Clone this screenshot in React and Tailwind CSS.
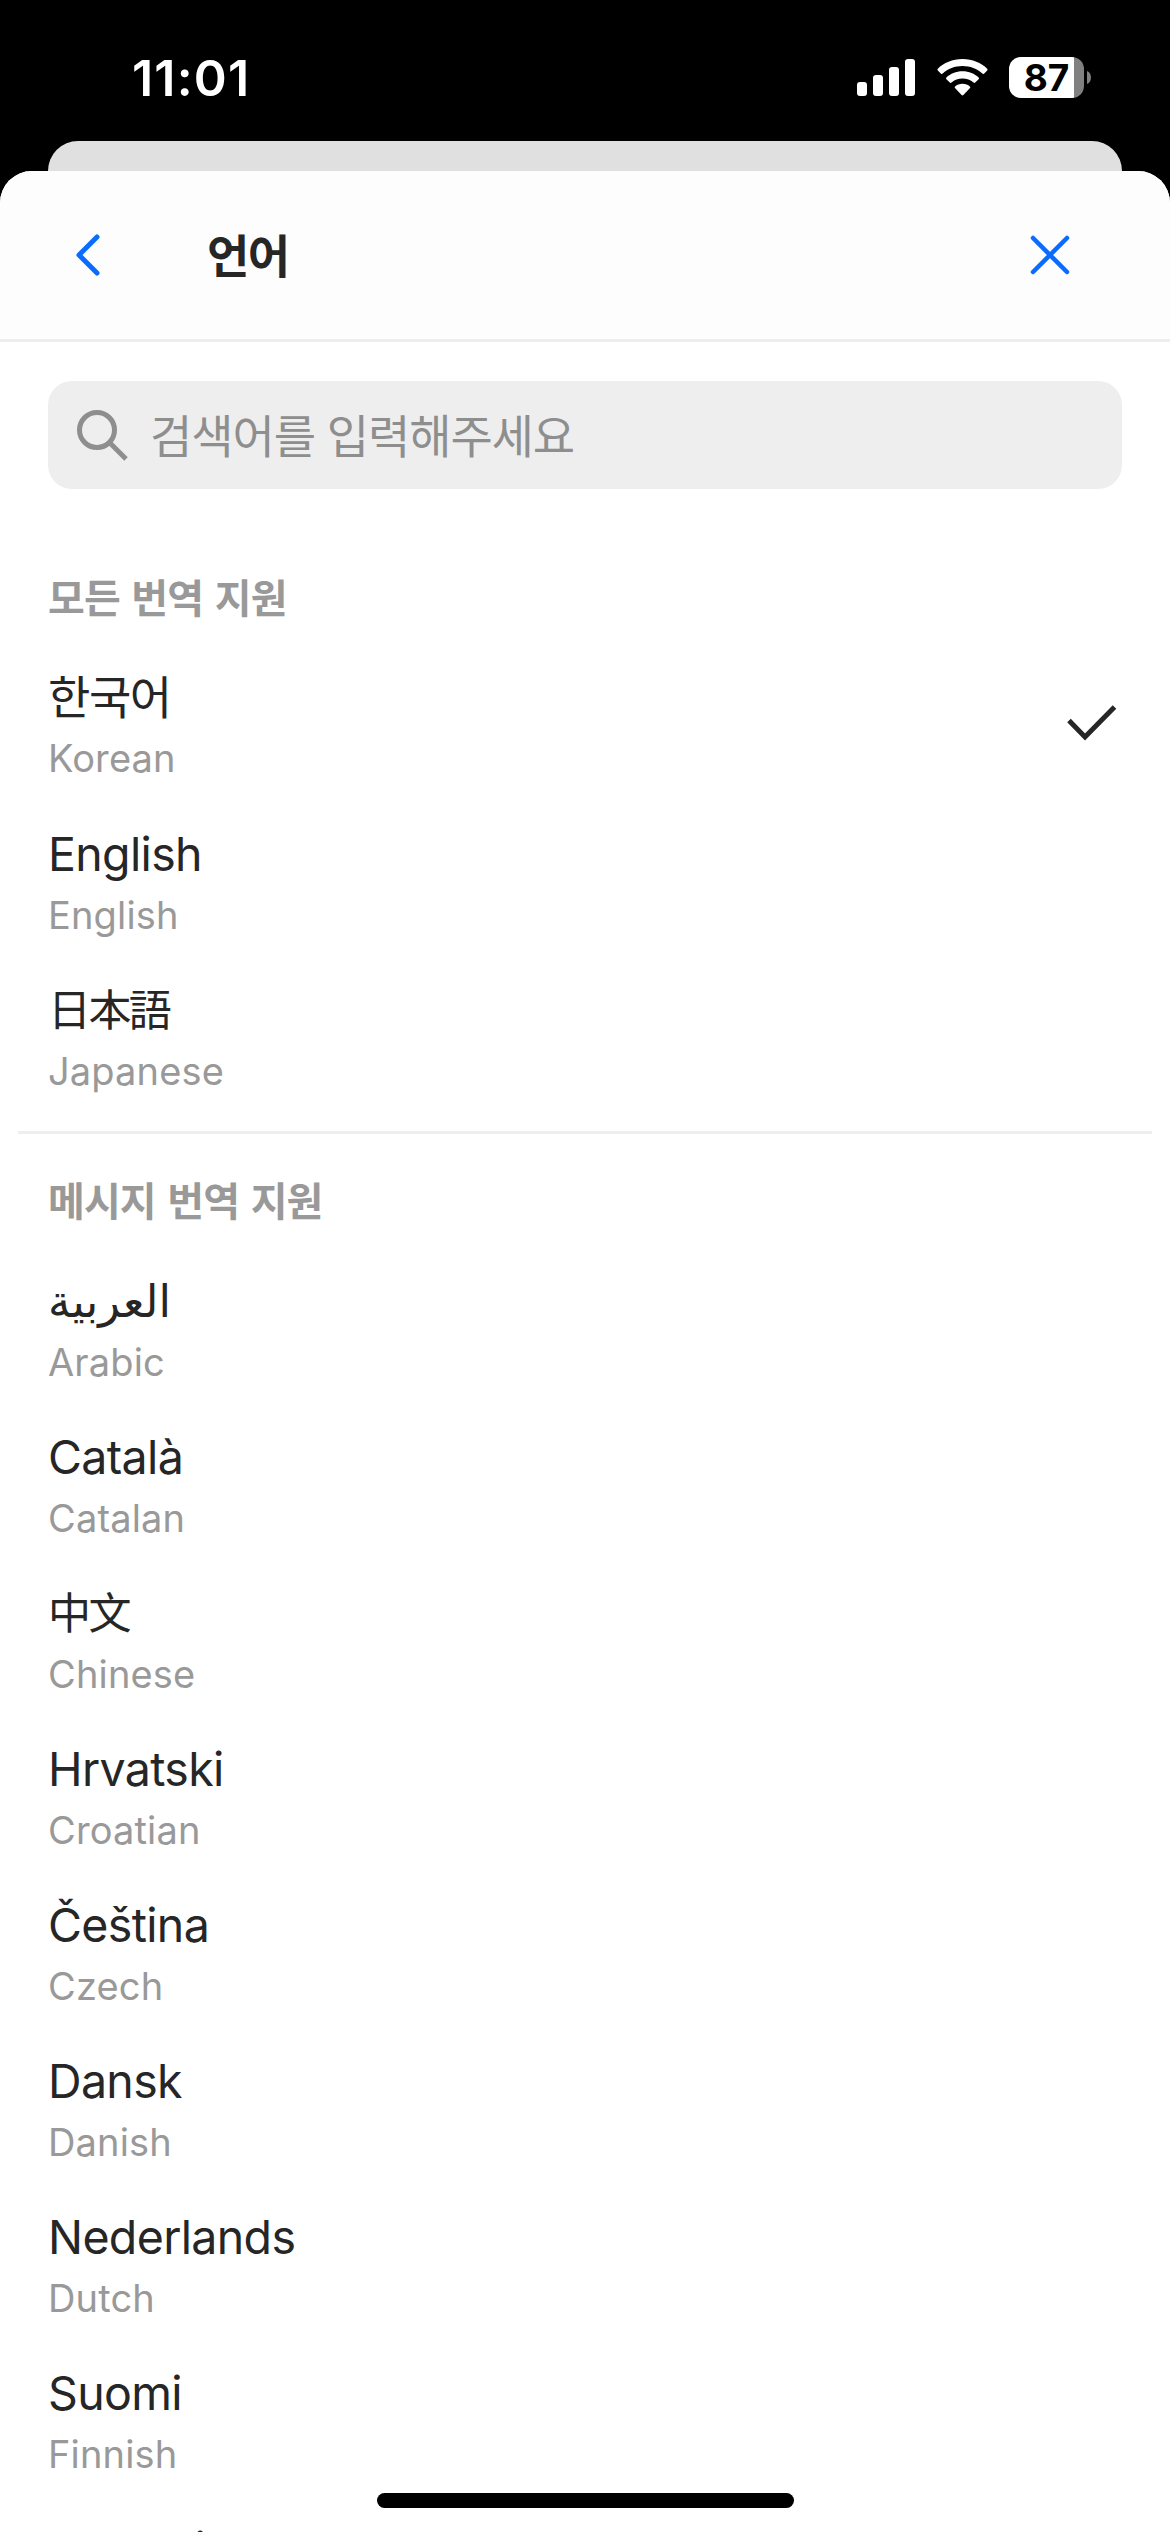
import React from "react";

// Languages grouped by the kind of translation they support
const sections = [
  {
    title: "모든 번역 지원",
    languages: [
      { id: "ko", name: "한국어", label: "Korean", nameClass: "text-[46px] tracking-[-1.4px] -mt-px mb-px" },
      { id: "en", name: "English", label: "English" },
      { id: "ja", name: "日本語", label: "Japanese", nameClass: "font-['Inter','Noto_Sans_CJK_JP',sans-serif] text-[43px] tracking-[-2.6px]" },
    ],
  },
  {
    title: "메시지 번역 지원",
    languages: [
      { id: "ar", name: "العربية", label: "Arabic", nameClass: "font-['Inter','DejaVu_Sans',sans-serif] text-[45px]" },
      { id: "ca", name: "Català", label: "Catalan" },
      { id: "zh", name: "中文", label: "Chinese", nameClass: "font-['Inter','Noto_Sans_CJK_SC',sans-serif] text-[43px] tracking-[-2.6px]" },
      { id: "hr", name: "Hrvatski", label: "Croatian" },
      { id: "cs", name: "Čeština", label: "Czech" },
      { id: "da", name: "Dansk", label: "Danish" },
      { id: "nl", name: "Nederlands", label: "Dutch" },
      { id: "fi", name: "Suomi", label: "Finnish" },
      { id: "fr", name: "Français", label: "French" },
    ],
  },
];

const StatusBar = () => (
  <div className="flex h-[141px] items-start justify-between pl-[132px] pr-[79px] text-white">
    <div className="pt-[48px] text-[50px] font-semibold leading-[60px] tracking-[1.2px]">11:01</div>

    <div className="flex items-start pt-[57px]">
      {/* Signal */}
      <div className="mt-[2px] flex h-[37px] w-[58px] items-end gap-[6px]">
        <div className="h-[14px] w-[10px] rounded-[3px] bg-white" />
        <div className="h-[21px] w-[10px] rounded-[3px] bg-white" />
        <div className="h-[29px] w-[10px] rounded-[3px] bg-white" />
        <div className="h-[37px] w-[10px] rounded-[3px] bg-white" />
      </div>

      {/* Wifi */}
      <svg className="ml-[22px] mt-[2px]" width="51" height="37" viewBox="0 0 51 37" fill="#fff">
        <path d="M25.5 0C35.500 0 44.300 3.900 50.200 9.700Q51 10.600 50.200 11.500L47 14.700Q46.200 15.400 45.300 14.600C40 9.700 33.200 7 25.500 7S11 9.700 5.700 14.600Q4.800 15.400 4 14.700L.8 11.500Q0 10.600 .8 9.700C6.700 3.900 15.500 0 25.500 0Z" />
        <path d="M25.500 12.300C32 12.300 37.500 14.800 41.600 18.500Q42.500 19.400 41.600 20.300L38.200 23.600Q37.400 24.300 36.500 23.600C33.500 21 29.800 19.500 25.500 19.500S17.500 21 14.500 23.600Q13.600 24.300 12.800 23.600L9.400 20.300Q8.500 19.400 9.400 18.500C13.500 14.800 19 12.300 25.500 12.300Z" />
        <path d="M25.500 24.800C28.500 24.800 31 25.900 32.900 27.400Q33.800 28.200 33 29.100L26.400 36Q25.500 36.900 24.600 36L18 29.100Q17.200 28.200 18.100 27.400C20 25.900 22.500 24.800 25.500 24.800Z" />
      </svg>

      {/* Battery */}
      <div className="ml-[21px] flex h-[41px] w-[75px] items-center justify-center rounded-[12px] bg-[linear-gradient(to_right,#fff_65px,#808080_65px)] text-[37px] font-bold leading-[46px] text-black">
        87
      </div>
      <svg className="ml-[3px] mt-[14px]" width="4" height="13" viewBox="0 0 4 13" fill="#808080">
        <path d="M0 0C5.300 2 5.300 11 0 13Z" />
      </svg>
    </div>
  </div>
);

const Header = () => (
  <header className="flex h-[171px] items-center justify-between border-b-[3px] border-[#eeeeee] bg-[#fdfdfd] pl-[73px] pr-[98px]">
    <div className="flex items-center">
      <svg width="28" height="46" viewBox="0 0 28 46" fill="none" stroke="#0a6cff" strokeWidth="5" strokeLinecap="round" strokeLinejoin="round">
        <path d="M24 5L6 23L24 41" />
      </svg>
      <h1 className="ml-[106px] mt-[2px] text-[46px] font-bold leading-[60px] tracking-[-1.5px] text-[#262626]">언어</h1>
    </div>
    <svg width="44" height="44" viewBox="0 0 44 44" fill="none" stroke="#0a6cff" strokeWidth="4.500" strokeLinecap="round">
      <path d="M5 5L39 39M39 5L5 39" />
    </svg>
  </header>
);

const SearchField = () => (
  <div className="px-[48px] pt-[39px]">
    <div className="flex h-[108px] items-center rounded-[24px] bg-[#eeeeee] pl-[29px]">
      <svg width="52" height="52" viewBox="0 0 52 52" fill="none" stroke="#8e8e8e" strokeWidth="5">
        <circle cx="20" cy="21" r="17.500" />
        <path d="M32.500 33.500L49 50" />
      </svg>
      <span className="ml-[21px] mt-[2px] text-[46px] leading-[60px] tracking-[-1.1px] text-[#8e8e8e]">검색어를 입력해주세요</span>
    </div>
  </div>
);

const LanguageRow = ({ language, selected }) => (
  <li className="flex h-[156px] items-start justify-between pl-[48px] pr-[53px]">
    <div className="pt-[23px]">
      <div className={`h-[60px] leading-[60px] text-[#262626] ${language.nameClass || "text-[46.5px] tracking-[-0.65px]"}`}>
        {language.name}
      </div>
      <div className="mt-[7px] h-[48px] text-[38px] leading-[48px] tracking-[0.15px] text-[#999999]">{language.label}</div>
    </div>
    {selected && (
      <svg className="mt-[59px]" width="52" height="38" viewBox="0 0 52 38" fill="none" stroke="#262626" strokeWidth="5">
        <path d="M4 16.500L20 33L49.500 3" />
      </svg>
    )}
  </li>
);

const LanguageSection = ({ section, selectedId }) => (
  <section>
    <h2 className="h-[114px] pl-[48px] pt-[44px] text-[40px] font-bold leading-[48px] tracking-[-0.9px] text-[#999999] [word-spacing:3px]">
      {section.title}
    </h2>
    <ul>
      {section.languages.map((language) => (
        <LanguageRow key={language.id} language={language} selected={language.id === selectedId} />
      ))}
    </ul>
  </section>
);

const App = () => (
  <div className="relative h-[2532px] w-[1170px] overflow-hidden bg-black font-['Inter','Noto_Sans_CJK_KR',sans-serif]">
    <StatusBar />

    {/* Edge of the sheet behind */}
    <div className="mx-[48px] h-[70px] rounded-t-[30px] bg-[#e0e0e0]" />

    <main className="relative -mt-[40px] h-[2361px] overflow-hidden rounded-t-[32px] bg-white">
      <Header />
      <SearchField />
      <div className="h-[42px]" />
      <LanguageSection section={sections[0]} selectedId="ko" />
      <div className="mx-[18px] mt-[18px] h-[3px] bg-[#eeeeee]" />
      <LanguageSection section={sections[1]} selectedId="ko" />
    </main>

    {/* Home indicator */}
    <div className="absolute bottom-[24px] left-[377px] h-[15px] w-[417px] rounded-full bg-black" />
  </div>
);

export default App;
